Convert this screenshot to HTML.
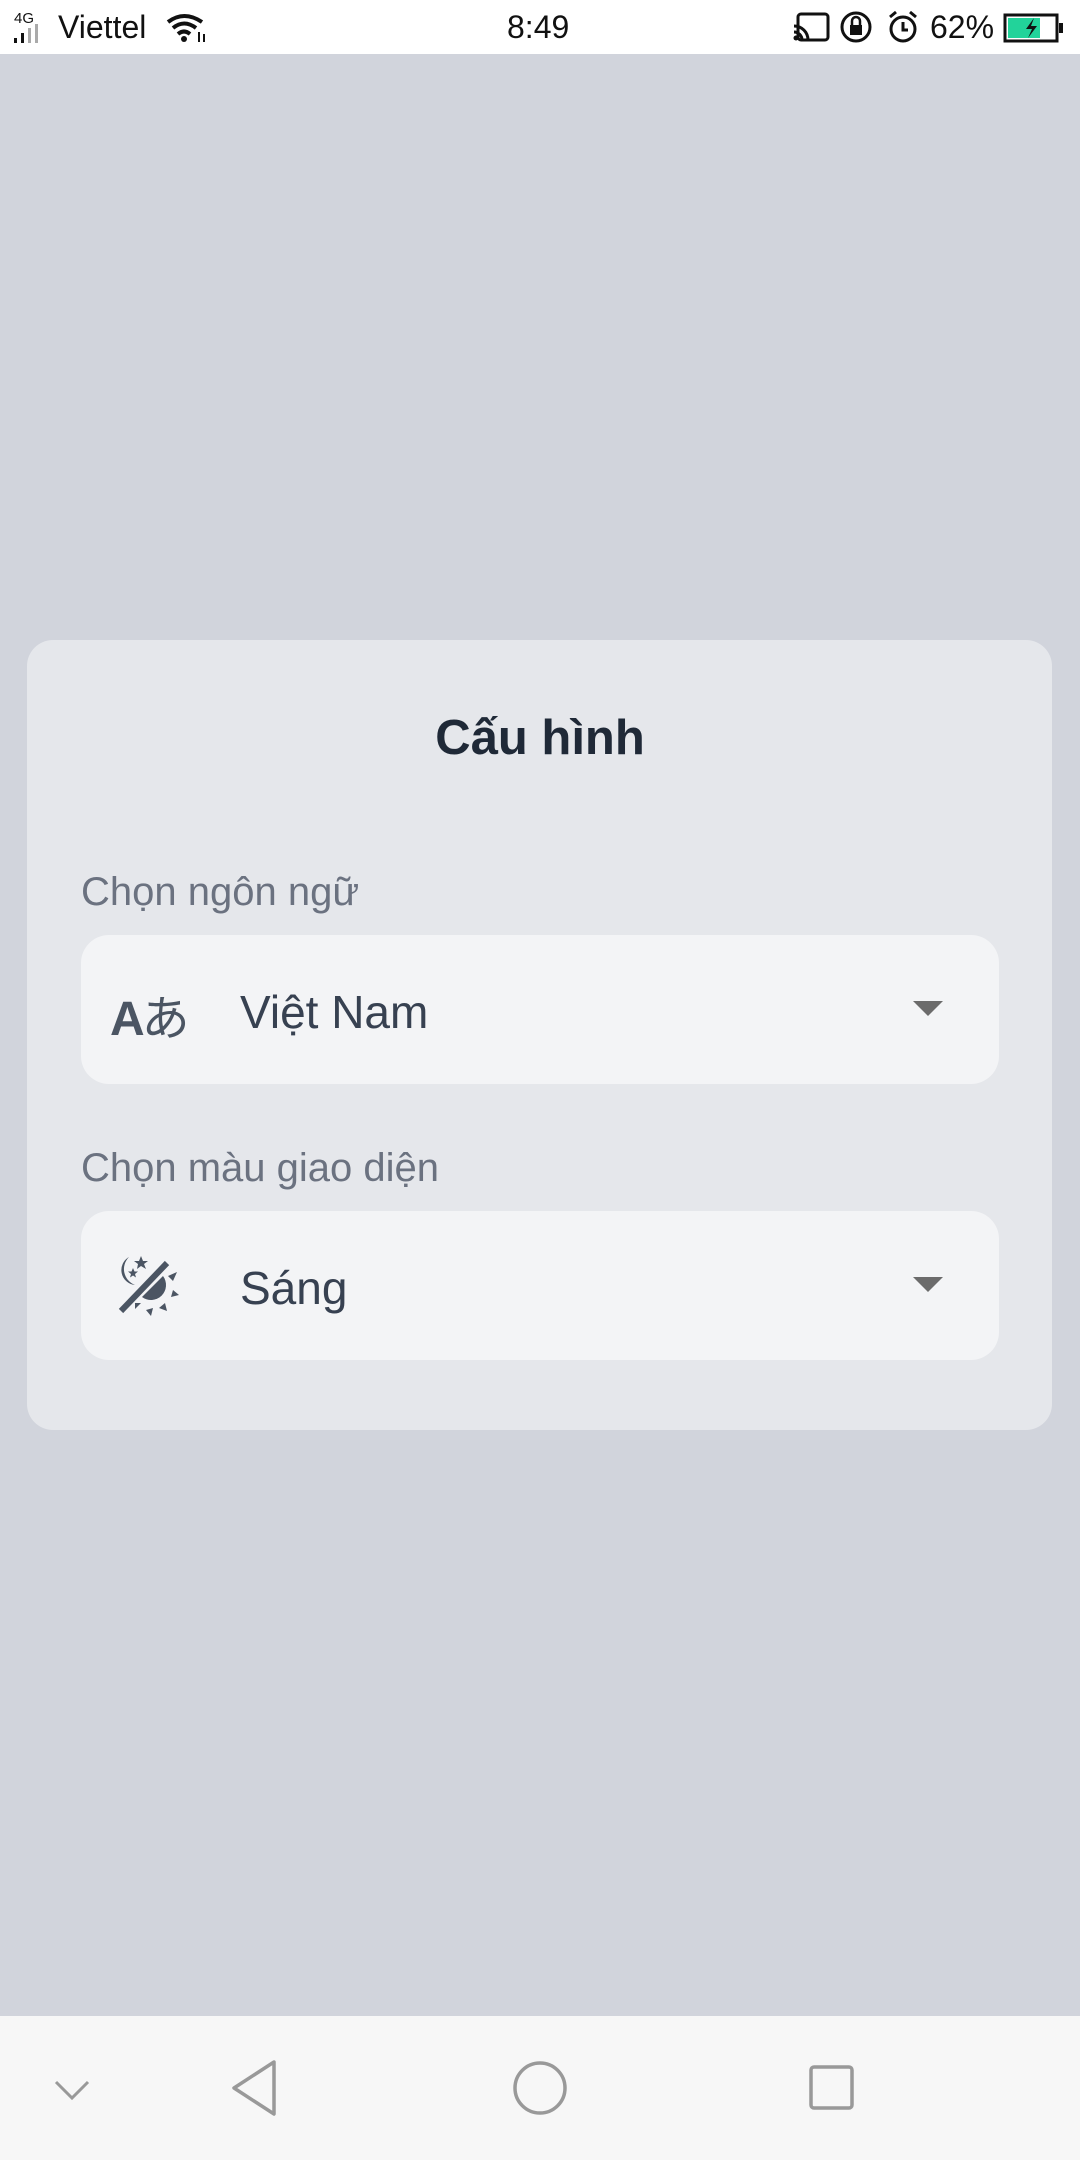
<!DOCTYPE html>
<html><head><meta charset="utf-8"><style>
*{margin:0;padding:0;box-sizing:border-box}
body{width:1080px;height:2160px;background:#d1d4dc;font-family:"Liberation Sans",sans-serif;position:relative;overflow:hidden}
.sb{position:absolute;top:0;left:0;width:1080px;height:54px;background:#fff;font-size:32px;color:#111}
.card{position:absolute;left:27px;top:640px;width:1025px;height:790px;background:#e5e7eb;border-radius:26px}
.title{position:absolute;top:710px;left:0;width:1080px;text-align:center;font-size:49px;font-weight:bold;color:#1f2937}
.lbl{position:absolute;left:81px;font-size:40px;color:#6b7280}
.dd{position:absolute;left:81px;width:918px;height:149px;background:#f3f4f6;border-radius:28px}
.val{position:absolute;left:159px;top:50px;font-size:46px;color:#374151}
.arr{position:absolute;left:832px;top:66px;width:0;height:0;border-left:15px solid transparent;border-right:15px solid transparent;border-top:15px solid #6b6b6b}
.nav{position:absolute;left:0;top:2016px;width:1080px;height:144px;background:#f7f7f7}
</style></head><body>
<div class="sb">
 <span style="position:absolute;left:14px;top:10px;font-size:15px">4G</span>
 <svg style="position:absolute;left:14px;top:24px" width="40" height="20"><rect x="0" y="14" width="3" height="5" fill="#111"/><rect x="7" y="9" width="3" height="10" fill="#111"/><rect x="14" y="4" width="3" height="15" fill="#aaa"/><rect x="21" y="0" width="3" height="19" fill="#aaa"/></svg>
 <span style="position:absolute;left:58px;top:9px">Viettel</span>
 <svg style="position:absolute;left:166px;top:12px" width="44" height="32"><path d="M2 10 Q18 -2 36 10 M7 16 Q18 7 30 16 M12 22 Q18 17 24 22" stroke="#111" stroke-width="4" fill="none"/><circle cx="18" cy="27" r="3" fill="#111"/><path d="M33 20v10M38 22v8" stroke="#111" stroke-width="2"/></svg>
 <span style="position:absolute;left:507px;top:9px">8:49</span>
 <svg style="position:absolute;left:792px;top:12px" width="40" height="30"><rect x="6" y="2" width="30" height="26" rx="3" fill="none" stroke="#111" stroke-width="3"/><path d="M2 14 a14 14 0 0 1 14 14 M2 20 a8 8 0 0 1 8 8" stroke="#111" stroke-width="3" fill="none"/><circle cx="4" cy="26" r="2.5" fill="#111"/></svg>
 <svg style="position:absolute;left:840px;top:10px" width="36" height="34"><circle cx="16" cy="17" r="14" fill="none" stroke="#111" stroke-width="3"/><rect x="10" y="15" width="12" height="10" fill="#111"/><path d="M12 15v-4a4 4 0 0 1 8 0v4" stroke="#111" stroke-width="2.5" fill="none"/></svg>
 <svg style="position:absolute;left:886px;top:10px" width="34" height="34"><circle cx="17" cy="19" r="12" fill="none" stroke="#111" stroke-width="3"/><path d="M17 12v8h5M4 7l6-5M30 7l-6-5" stroke="#111" stroke-width="3" fill="none"/></svg>
 <span style="position:absolute;left:930px;top:9px">62%</span>
 <svg style="position:absolute;left:1003px;top:13px" width="62" height="30"><rect x="2" y="2" width="52" height="26" fill="none" stroke="#111" stroke-width="3"/><rect x="5" y="5" width="32" height="20" fill="#22d39a"/><rect x="56" y="10" width="4" height="10" fill="#111"/><path d="M31 5 L23 16 H29 L25 25 L34 13 H28 Z" fill="#111"/></svg>
</div>
<div class="card"></div>
<div class="title">Cấu hình</div>
<div class="lbl" style="top:870px">Chọn ngôn ngữ</div>
<div class="dd" style="top:935px">
 <div style="position:absolute;left:29px;top:44px;font-size:48px;color:#4b5563;font-family:'Liberation Sans','Noto Sans CJK JP',sans-serif;letter-spacing:-3px"><b>A</b>あ</div>
 <div class="val">Việt Nam</div><div class="arr"></div>
</div>
<div class="lbl" style="top:1146px">Chọn màu giao diện</div>
<div class="dd" style="top:1211px">
 <svg style="position:absolute;left:32px;top:42px" width="66" height="66" viewBox="0 0 66 66"><path d="M16 4 A15 15 0 0 0 22 32 A17 17 0 0 1 16 4Z" fill="#4b5563"/><path d="M28 3l2 5 5 0-4 3 2 5-5-3-4 3 1-5-4-3 5 0z" fill="#4b5563"/><path d="M20 15l1.5 3.5 3.5 0-3 2.5 1 3.5-3-2-3 2 1-3.5-3-2.5 3.5 0z" fill="#4b5563"/><path d="M8 58 L54 10" stroke="#4b5563" stroke-width="6"/><path d="M50 23 A15 15 0 0 1 29 44 Z" fill="#4b5563"/><path d="M55 23l9-4-4 9zM60 37l6 5-8 2zM52 50l2 8-8-3zM40 55l-2 8-5-6zM28 50l-6 6 0-6z" fill="#4b5563"/></svg>
 <div class="val">Sáng</div><div class="arr"></div>
</div>
<div class="nav">
 <svg style="position:absolute;left:52px;top:62px" width="40" height="24"><path d="M4 4 L20 20 L36 4" stroke="#999" stroke-width="3" fill="none"/></svg>
 <svg style="position:absolute;left:228px;top:42px" width="52" height="60"><path d="M46 4 L6 30 L46 56 Z" stroke="#999" stroke-width="3.5" fill="none" stroke-linejoin="round"/></svg>
 <svg style="position:absolute;left:511px;top:43px" width="58" height="58"><circle cx="29" cy="29" r="25" stroke="#999" stroke-width="3.5" fill="none"/></svg>
 <svg style="position:absolute;left:808px;top:48px" width="48" height="48"><rect x="3" y="3" width="41" height="41" rx="3" stroke="#999" stroke-width="3.5" fill="none"/></svg>
</div>
</body></html>
